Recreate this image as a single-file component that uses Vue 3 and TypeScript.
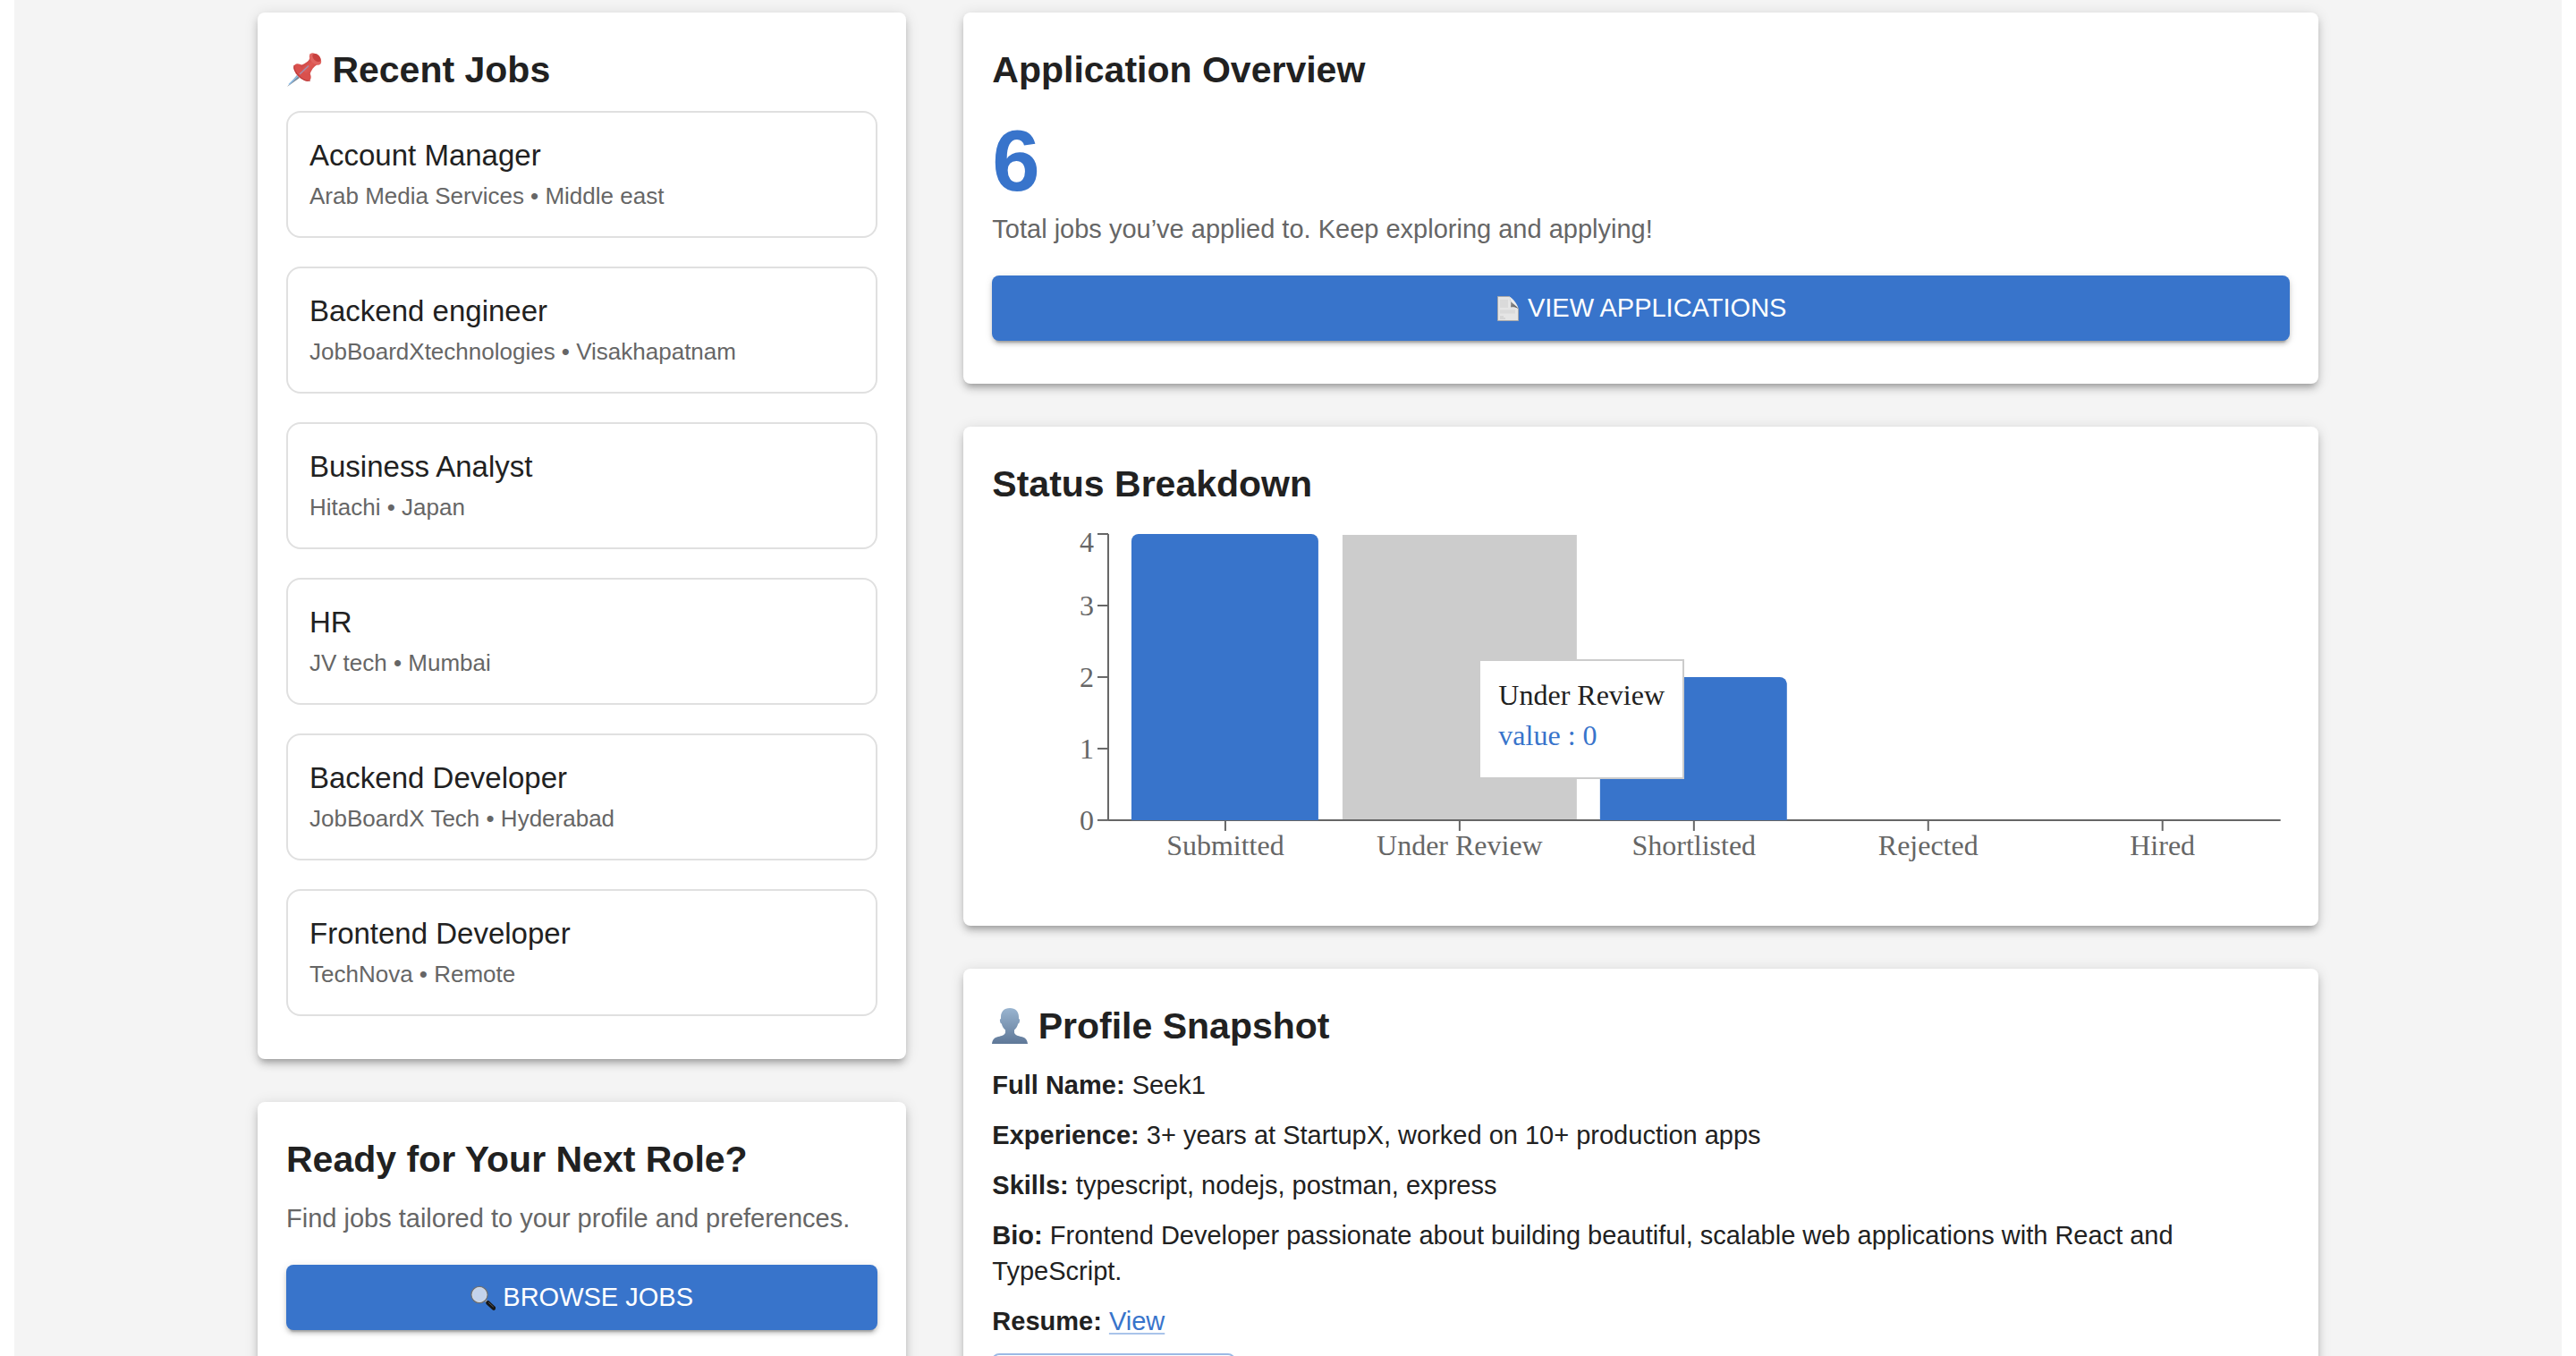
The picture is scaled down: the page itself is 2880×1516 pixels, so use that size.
<script setup lang="ts">
interface Job {
  title: string
  company: string
  location: string
}

interface StatusCount {
  name: string
  value: number
}

const jobs: Job[] = [
  { title: 'Account Manager', company: 'Arab Media Services', location: 'Middle east' },
  { title: 'Backend engineer', company: 'JobBoardXtechnologies', location: 'Visakhapatnam' },
  { title: 'Business Analyst', company: 'Hitachi', location: 'Japan' },
  { title: 'HR', company: 'JV tech', location: 'Mumbai' },
  { title: 'Backend Developer', company: 'JobBoardX Tech', location: 'Hyderabad' },
  { title: 'Frontend Developer', company: 'TechNova', location: 'Remote' },
]

const profile = [
  { label: 'Full Name:', text: 'Seek1' },
  { label: 'Experience:', text: '3+ years at StartupX, worked on 10+ production apps' },
  { label: 'Skills:', text: 'typescript, nodejs, postman, express' },
  {
    label: 'Bio:',
    text: 'Frontend Developer passionate about building beautiful, scalable web applications with React and TypeScript.',
  },
]

const statuses: StatusCount[] = [
  { name: 'Submitted', value: 4 },
  { name: 'Under Review', value: 0 },
  { name: 'Shortlisted', value: 2 },
  { name: 'Rejected', value: 0 },
  { name: 'Hired', value: 0 },
]

// Chart geometry, in viewBox units
const plot = { left: 130, right: 1441, top: 10, bottom: 330 }
const band = (plot.right - plot.left) / statuses.length
const unit = (plot.bottom - plot.top) / 4
const barWidth = 209
const hovered = 1

const center = (i: number): number => Math.floor(plot.left + band * (i + 0.5))
const yOf = (v: number): number => plot.bottom - v * unit

// The topmost label is kept inside the drawing area
const labelY = (v: number): number => (v === 4 ? yOf(v) + 20 : yOf(v) + 11)

function barPath(i: number, value: number): string {
  const x = Math.floor(plot.left + band * i + 26)
  const y = yOf(value)
  const r = 8
  return `M${x},${plot.bottom}V${y + r}a${r},${r} 0 0 1 ${r},-${r}h${barWidth - 2 * r}a${r},${r} 0 0 1 ${r},${r}V${plot.bottom}z`
}
</script>

<template>
  <div class="page">
    <main class="surface">
      <div class="columns">
        <div class="column">
          <section class="card">
            <h2>
              <svg class="emoji" viewBox="0 0 40 40" aria-hidden="true">
                <defs>
                  <linearGradient id="neck" x1="0" y1="0" x2="1" y2="1">
                    <stop offset="0" stop-color="#b93236" />
                    <stop offset="0.5" stop-color="#df5a55" />
                    <stop offset="1" stop-color="#c9423f" />
                  </linearGradient>
                </defs>
                <path d="M1 39L12 26l3 3z" fill="#7b8794" />
                <path d="M3 36.500L15 25" stroke="#8fc0ea" stroke-width="1.500" />
                <ellipse cx="18" cy="23" rx="12" ry="6.500" transform="rotate(45 18 23)" fill="#d9504d" />
                <path d="M9 15c-1 4 1.500 8 6 12.500S24 33 27 32" fill="none" stroke="#b53434" stroke-width="1" />
                <path d="M26 6c1 3-4 7-10 9 1 5 5 9 10 11 2-6 5-10 9-12z" fill="url(#neck)" />
                <ellipse cx="32.500" cy="8" rx="8" ry="5" transform="rotate(45 32.500 8)" fill="#e06460" />
                <ellipse cx="34" cy="6.500" rx="5.500" ry="3.500" transform="rotate(45 34 6.500)" fill="#c8403e" />
                <path d="M15 25L25 15.500" stroke="#a58fae" stroke-width="1.500" />
              </svg>
              Recent Jobs
            </h2>
            <ul class="jobs">
              <li v-for="job in jobs" :key="job.title" class="job">
                <h3>{{ job.title }}</h3>
                <p class="caption">{{ job.company }} • {{ job.location }}</p>
              </li>
            </ul>
          </section>

          <section class="card">
            <h2>Ready for Your Next Role?</h2>
            <p class="muted">Find jobs tailored to your profile and preferences.</p>
            <button type="button" class="primary">
              <svg class="emoji-small" viewBox="0 0 28 28" aria-hidden="true">
                <path d="M17 17l3 3" stroke="#a9a9a9" stroke-width="3" />
                <path d="M19.500 19.500l6.500 6" stroke="#161616" stroke-width="4.500" stroke-linecap="round" />
                <path d="M20.500 19.500l5 4.500" stroke="#5b5b5b" stroke-width="1" stroke-linecap="round" />
                <circle cx="10" cy="10.500" r="9" fill="#c3d3ec" stroke="#6d7075" stroke-width="1.500" />
                <circle cx="10" cy="10.500" r="8" fill="none" stroke="#d6dbe2" stroke-width="1" />
              </svg>
              BROWSE JOBS
            </button>
          </section>
        </div>

        <div class="column">
          <section class="card">
            <h2>Application Overview</h2>
            <p class="total">6</p>
            <p class="muted">Total jobs you’ve applied to. Keep exploring and applying!</p>
            <button type="button" class="primary">
              <svg class="emoji-small" viewBox="0 0 28 28" aria-hidden="true">
                <defs>
                  <linearGradient id="fold" x1="0" y1="0" x2="1" y2="1">
                    <stop offset="0" stop-color="#d8d8d8" />
                    <stop offset="0.4" stop-color="#8b8b8b" />
                    <stop offset="1" stop-color="#4c4c4c" />
                  </linearGradient>
                </defs>
                <path d="M2.500 .500h13l10 13.500v13.500h-23z" fill="#e5e5e5" stroke="#a8a8a8" stroke-width="1" />
                <path d="M5 4h9v9H5zM5 15.500h17v4H5z" fill="#dadada" />
                <path d="M5 23h4M5 25h6" stroke="#c6c6c6" />
                <path d="M15.500 .500c1.500 4 2 8 1.500 12 3-.500 6 0 8.500 1.500z" fill="url(#fold)" />
                <path d="M15.500 .500c4 2 8.500 8 10 13l-8-7z" fill="#ececec" />
              </svg>
              VIEW APPLICATIONS
            </button>
          </section>

          <section class="card">
            <h2>Status Breakdown</h2>
            <div class="chart">
              <svg viewBox="0 0 1451 400" role="img" aria-label="Status Breakdown">
                <rect
                  :x="Math.round(plot.left + band * hovered)"
                  :y="plot.top + 1"
                  :width="Math.round(band)"
                  :height="plot.bottom - plot.top"
                  fill="#ccc"
                />
                <g stroke="#666" stroke-width="2">
                  <path :d="`M${plot.left},${plot.bottom}H${plot.right}M${plot.left},${plot.top}V${plot.bottom}`" />
                  <path v-for="(s, i) in statuses" :key="s.name" :d="`M${center(i)},${plot.bottom}v12`" />
                  <path v-for="v in [0, 1, 2, 3, 4]" :key="v" :d="`M${plot.left - 12},${yOf(v)}h12`" />
                </g>
                <template v-for="(s, i) in statuses" :key="s.name">
                  <path v-if="s.value > 0" :d="barPath(i, s.value)" fill="#3874cb" />
                </template>
                <g class="tick" text-anchor="end">
                  <text v-for="v in [0, 1, 2, 3, 4]" :key="v" :x="plot.left - 16" :y="labelY(v)">{{ v }}</text>
                </g>
                <g class="tick" text-anchor="middle">
                  <text v-for="(s, i) in statuses" :key="s.name" :x="center(i)" :y="plot.bottom + 39">{{ s.name }}</text>
                </g>
              </svg>
              <div class="tooltip">
                <p>{{ statuses[hovered].name }}</p>
                <p class="tooltip-value">value : {{ statuses[hovered].value }}</p>
              </div>
            </div>
          </section>

          <section class="card">
            <h2>
              <svg class="emoji" viewBox="0 0 40 40" aria-hidden="true">
                <defs>
                  <linearGradient id="bust" x1="0" y1="0" x2="0" y2="1">
                    <stop offset="0" stop-color="#9ab5d0" />
                    <stop offset="1" stop-color="#5f7898" />
                  </linearGradient>
                </defs>
                <path
                  d="M20 0c6.500 0 10 4 10 10v2c1 0 1.300 1 1 2.500-.300 1.800-.800 3-1.800 3-.700 3.500-2.500 5.500-4.200 7v3c1 3 4 3.500 8 4.500 4.500 1 6.500 3.500 7 8H0c.500-4.500 2.500-7 7-8 4-1 7-1.500 8-4.500v-3c-1.700-1.500-3.500-3.500-4.200-7-1 0-1.500-1.200-1.800-3C8.700 13 9 12 10 12v-2C10 4 13.500 0 20 0z"
                  fill="url(#bust)"
                />
              </svg>
              Profile Snapshot
            </h2>
            <div class="profile">
              <p v-for="row in profile" :key="row.label"><strong>{{ row.label }}</strong> {{ row.text }}</p>
              <p><strong>Resume:</strong> <a href="#resume">View</a></p>
            </div>
            <button type="button" class="outlined"></button>
          </section>
        </div>
      </div>
    </main>
  </div>
</template>

<style>
body {
  margin: 0;
  background: #fff;
}
</style>

<style scoped>
.page {
  height: 100vh;
  padding: 0 16px;
  overflow: hidden;
  box-sizing: border-box;
  color: #212121;
  font-family: "Liberation Sans", Arial, sans-serif;
  font-size: 29px;
  line-height: 40px;
}

.surface {
  min-height: 100%;
  padding: 14px 48px 48px;
  box-sizing: border-box;
  background: #f4f4f4;
}

.columns {
  display: grid;
  grid-template-columns: calc((100% + 64px) / 3 - 64px) minmax(0, 1fr);
  column-gap: 64px;
  align-items: start;
  max-width: 2304px;
  margin: 0 auto;
}

.column {
  display: flex;
  flex-direction: column;
  gap: 48px;
}

.card {
  padding: 32px 32px 48px;
  border-radius: 8px;
  background: #fff;
  box-shadow:
    0 6px 6px -4px rgba(0, 0, 0, 0.2),
    0 6px 8px 0 rgba(0, 0, 0, 0.14),
    0 2px 16px 0 rgba(0, 0, 0, 0.12);
}

h2,
h3,
p,
ul {
  margin: 0;
  padding: 0;
}

h2 {
  margin-bottom: 14px;
  font-size: 41px;
  line-height: 64px;
  font-weight: 700;
}

.emoji {
  width: 40px;
  height: 40px;
  vertical-align: -6px;
}

.emoji-small {
  width: 28px;
  height: 28px;
  margin-right: 8px;
}

.jobs {
  display: flex;
  flex-direction: column;
  gap: 32px;
  list-style: none;
}

.job {
  padding: 24px;
  border: 2px solid #e0e0e0;
  border-radius: 16px;
}

h3 {
  font-size: 33px;
  line-height: 48px;
  font-weight: 400;
}

.caption {
  color: #666;
  font-size: 26px;
  line-height: 42px;
}

.muted {
  color: #666;
}

.total {
  color: #3874cb;
  font-size: 96px;
  line-height: 112px;
  font-weight: 700;
}

.primary {
  display: flex;
  align-items: center;
  justify-content: center;
  width: 100%;
  margin-top: 32px;
  padding: 12px 32px;
  border: 0;
  border-radius: 8px;
  background: #3874cb;
  color: #fff;
  font-family: inherit;
  font-size: 29px;
  line-height: 49px;
  box-shadow:
    0 6px 2px -4px rgba(0, 0, 0, 0.2),
    0 4px 4px 0 rgba(0, 0, 0, 0.14),
    0 2px 10px 0 rgba(0, 0, 0, 0.12);
}

.chart {
  position: relative;
}

.chart svg {
  display: block;
  width: 100%;
}

.tick {
  fill: #666;
  font-family: "Liberation Serif", "Times New Roman", serif;
  font-size: 32px;
}

.tooltip {
  position: absolute;
  top: 150px;
  left: 37.5%;
  padding: 20px;
  border: 2px solid #ccc;
  background: #fff;
  font-family: "Liberation Serif", "Times New Roman", serif;
  font-size: 32px;
  line-height: 37px;
  white-space: nowrap;
}

.tooltip-value {
  padding: 8px 0;
  color: #3874cb;
}

.profile {
  display: flex;
  flex-direction: column;
  gap: 16px;
}

a {
  color: #3874cb;
  text-decoration-color: #a9c4ea;
  text-decoration-thickness: 2px;
  text-underline-offset: 3px;
}

.outlined {
  display: block;
  width: 272px;
  height: 73px;
  margin-top: 16px;
  border: 2px solid #9bb9e5;
  border-radius: 8px;
  background: transparent;
}
</style>
